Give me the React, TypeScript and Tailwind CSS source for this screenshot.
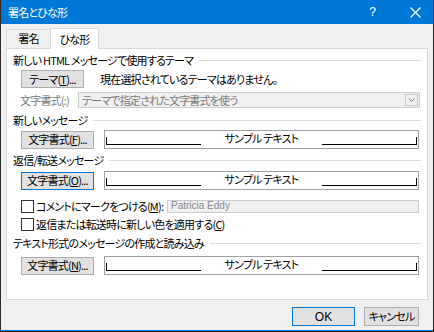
import React from "react";

const jp = `[font-family:'Noto_Sans_CJK_JP','Noto_Sans',sans-serif] [font-feature-settings:'palt'_1] [font-variant-east-asian:proportional-width] text-[11px] tracking-[-0.8px] leading-none whitespace-nowrap`;

function Btn({ children, w, focused }: { children: React.ReactNode; w: string; focused?: boolean }) {
  return (
    <div
      className={`${w} h-[18px] flex items-center justify-center bg-[#e1e1e1] border ${
        focused ? "border-[#0078d7]" : "border-[#adadad]"
      } text-black shrink-0 ${jp}`}
    >
      {children}
    </div>
  );
}

function Header({ text }: { text: string }) {
  return (
    <div className="h-[16px] flex items-center pl-[6px] pr-[6px]">
      <span className={`text-black ${jp}`}>{text}</span>
      <div className="flex-1 h-px bg-[#dcdcdc] ml-[6px]" />
    </div>
  );
}

function Sample() {
  return (
    <div className="w-[315px] h-[19px] border border-[#a0a0a0] bg-white flex items-end px-[1px] pb-[3px] shrink-0">
      <div className="w-[95px] h-[8px] border-b border-l border-black" />
      <div className={`flex-1 flex justify-center text-black -translate-y-[1px] ${jp}`}>サンプル テキスト</div>
      <div className="w-[95px] h-[8px] border-b border-r border-black" />
    </div>
  );
}

function Checkbox() {
  return <div className="w-[13px] h-[13px] border border-[#333333] bg-white shrink-0" />;
}

export default function App() {
  return (
    <div className="w-[434px] h-[332px] bg-[#f0f0f0] flex flex-col border-l border-r border-[#2b2b2b] overflow-hidden">
      {/* title bar */}
      <div className="h-[24px] bg-[#0078d7] flex items-center pl-[7px] shrink-0">
        <span className={`text-white ${jp}`}>署名とひな形</span>
        <div className="flex-1" />
        <span className="text-white text-[12px] leading-none mr-[34px] font-['Liberation_Sans',sans-serif]">?</span>
        <svg width="11" height="11" viewBox="0 0 11 11" className="mr-[12px]">
          <path d="M0.5 0.5 L10.5 10.5 M10.5 0.5 L0.5 10.5" stroke="white" strokeWidth="1.1" />
        </svg>
      </div>

      {/* tabs */}
      <div className="h-[24px] flex items-end pl-[5px] shrink-0 relative z-10">
        <div className={`w-[45px] h-[18px] border border-b-0 border-[#d9d9d9] bg-[#f0f0f0] flex items-center justify-center text-black mb-[1px] ${jp}`}>
          署名
        </div>
        <div className={`w-[49px] h-[21px] border border-b-0 border-[#d9d9d9] bg-white flex items-center justify-center text-black -mb-[1px] -ml-[1px] ${jp}`}>
          ひな形
        </div>
      </div>

      {/* panel */}
      <div className="mx-[5px] h-[252px] border border-[#d9d9d9] bg-white flex flex-col pt-[3px] shrink-0">
        <Header text="新しい HTML メッセージで使用するテーマ" />
        <div className="h-[18px] mt-[2px] flex items-center pl-[14px]">
          <Btn w="w-[63px]">
            テーマ(<u>T</u>)...
          </Btn>
          <span className={`ml-[16px] text-black ${jp}`}>現在選択されているテーマはありません。</span>
        </div>
        <div className="h-[16px] mt-[4px] flex items-center pl-[13px]">
          <span className={`text-[#7a7a7a] w-[58px] ${jp}`}>文字書式(:)</span>
          <div className="w-[342px] h-[16px] border border-[#cccccc] bg-[#f0f0f0] flex items-center pl-[3px] pr-[1px]">
            <span className={`flex-1 text-[#7a7a7a] ${jp}`}>テーマで指定された文字書式を使う</span>
            <div className="w-[13px] h-[12px] border border-[#cccccc] bg-[#f0f0f0] flex items-center justify-center">
              <svg width="7" height="4" viewBox="0 0 7 4">
                <path d="M0.5 0.5 L3.5 3.5 L6.5 0.5" stroke="#8a8a8a" fill="none" strokeWidth="1" />
              </svg>
            </div>
          </div>
        </div>

        <div className="mt-[4px]">
          <Header text="新しいメッセージ" />
        </div>
        <div className="h-[19px] mt-[2px] flex items-center pl-[14px]">
          <Btn w="w-[73px]">
            文字書式(<u>F</u>)...
          </Btn>
          <div className="ml-[10px]">
            <Sample />
          </div>
        </div>

        <div className="mt-[3px]">
          <Header text="返信/転送メッセージ" />
        </div>
        <div className="h-[19px] mt-[3px] flex items-center pl-[14px]">
          <Btn w="w-[73px]" focused>
            文字書式(<u>O</u>)...
          </Btn>
          <div className="ml-[10px]">
            <Sample />
          </div>
        </div>

        <div className="h-[14px] mt-[9px] flex items-center pl-[14px]">
          <Checkbox />
          <span className={`ml-[2px] text-black w-[131px] ${jp}`}>
            コメントにマークをつける(<u>M</u>):
          </span>
          <div className="w-[252px] h-[13px] border border-[#cccccc] bg-[#f0f0f0] flex items-center pl-[3px] text-[10px] leading-none text-[#8a8a8a] font-['Liberation_Sans',sans-serif]">
            Patricia Eddy
          </div>
        </div>
        <div className="h-[14px] mt-[4px] flex items-center pl-[14px]">
          <Checkbox />
          <span className={`ml-[2px] text-black ${jp}`}>
            返信または転送時に新しい色を適用する(<u>C</u>)
          </span>
        </div>

        <div className="mt-[4px]">
          <Header text="テキスト形式のメッセージの作成と読み込み" />
        </div>
        <div className="h-[19px] mt-[5px] flex items-center pl-[14px]">
          <Btn w="w-[73px]">
            文字書式(<u>N</u>)...
          </Btn>
          <div className="ml-[10px]">
            <Sample />
          </div>
        </div>
      </div>

      {/* bottom buttons */}
      <div className="flex justify-end pr-[14px] mt-[7px]">
        <div className="w-[63px] h-[19px] border border-[#0078d7] bg-[#e1e1e1] flex items-center justify-center text-[12px] leading-none text-black font-['Liberation_Sans',sans-serif]">
          OK
        </div>
        <div className={`w-[55px] h-[19px] ml-[9px] border border-[#adadad] bg-[#e1e1e1] flex items-center justify-center text-black ${jp}`}>
          キャンセル
        </div>
      </div>
      <div className="flex-1" />
      <div className="h-px bg-[#0078d7] shrink-0" />
      <div className="h-px bg-[#2b2b2b] shrink-0" />
    </div>
  );
}
